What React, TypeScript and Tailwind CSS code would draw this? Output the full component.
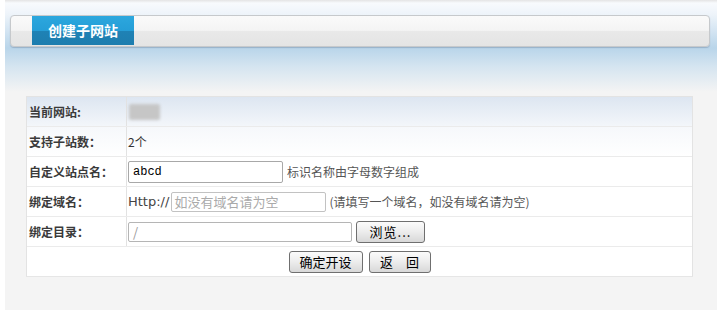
import React from "react";

const cjk = { fontFamily: '"Noto Sans CJK SC", "Noto Sans", sans-serif' };

function Btn({ children, className = "" }: { children: React.ReactNode; className?: string }) {
  return (
    <button
      className={`flex items-center justify-center border border-[#6f6f6f] rounded-[3px] bg-[linear-gradient(to_bottom,#fbfbfb_0%,#ececec_50%,#d8d8d8_100%)] text-[13px] leading-none text-black ${className}`}
      style={cjk}
    >
      {children}
    </button>
  );
}

function Row({ label, children, first = false }: { label: string; children?: React.ReactNode; first?: boolean }) {
  return (
    <div
      className={`flex h-[30px] border-b border-[#ebebeb] ${
        first
          ? "bg-[linear-gradient(to_bottom,#dde6f1,#f3f6fa)]"
          : ""
      }`}
    >
      <div className="w-[100px] shrink-0 border-r border-[#e2e2e2] flex items-center pl-[2px] text-[12px] font-bold text-[#3a3a3a]" style={cjk}>
        {label}
      </div>
      <div className="flex items-center pl-[1px] text-[12px] text-[#333]" style={cjk}>
        {children}
      </div>
    </div>
  );
}

export default function App() {
  return (
    <div className="w-[717px] h-[313px] bg-white pl-[5px]">
      <div className="h-[310px] bg-[#f4f4f4] bg-[linear-gradient(to_bottom,#e4e4e4_0px,#f8fafd_3px,#eef4fa_14px,#b9d5ea_48px,#d4e4f0_66px,#f4f4f4_92px)] bg-no-repeat pt-[15px]">
        <div className="ml-[5px] w-[700px] h-[32px] rounded-[4px] border border-[#c6c9cc] bg-[linear-gradient(to_bottom,#fafafa_0%,#f4f4f4_48%,#e9e9e9_50%,#e4e4e4_100%)] shadow-[0_1px_1px_rgba(90,110,140,0.35)] flex">
          <div
            className="ml-[21px] w-[102px] h-[29px] bg-[linear-gradient(to_bottom,#2ca7de_0%,#259ed7_50%,#1f82b5_52%,#1d7dae_100%)] flex items-center justify-center text-white text-[14px] font-bold"
            style={cjk}
          >
            创建子网站
          </div>
        </div>

        <div className="ml-[21px] mt-[49px] w-[667px] border border-[#e3e3e3] border-b-[#e6e6e6] bg-white">
          <Row label="当前网站:" first>
            <div className="ml-[1px] w-[31px] h-[16px] rounded-[2px] bg-[#c6c6c6] blur-[1.5px]" />
          </Row>
          <div className="bg-[linear-gradient(to_bottom,#f6f8fb,#ffffff)]">
            <Row label="支持子站数：">2个</Row>
          </div>
          <Row label="自定义站点名：">
            <div
              className="w-[155px] h-[22px] border border-[#a8a8a8] rounded-[2px] bg-white flex items-center pl-[4px] text-[12px] text-black"
              style={{ fontFamily: '"Liberation Mono", monospace' }}
            >
              abcd
            </div>
            <span className="ml-[4px] text-[#555]">标识名称由字母数字组成</span>
          </Row>
          <Row label="绑定域名：">
            <span className="text-[13px] text-[#444]" style={{ fontFamily: '"DejaVu Sans", sans-serif' }}>
              Http://
            </span>
            <div className="ml-[2px] w-[155px] h-[20px] border border-[#c2c2c2] rounded-[2px] bg-white flex items-center pl-[2px] text-[13px] text-[#aaa]">
              如没有域名请为空
            </div>
            <span className="ml-[3px] text-[#555]">(请填写一个域名，如没有域名请为空)</span>
          </Row>
          <Row label="绑定目录：">
            <div className="w-[224px] h-[20px] border border-[#b5b5b5] rounded-[2px] bg-white flex items-center pl-[4px] text-[13px] text-[#999]">
              /
            </div>
            <Btn className="ml-[4px] w-[69px] h-[22px] tracking-[1px]">浏览...</Btn>
          </Row>
          <div className="h-[29px] flex items-center justify-center gap-[6px]">
            <Btn className="w-[74px] h-[22px]">确定开设</Btn>
            <Btn className="w-[62px] h-[22px]">返　回</Btn>
          </div>
        </div>
      </div>
    </div>
  );
}
